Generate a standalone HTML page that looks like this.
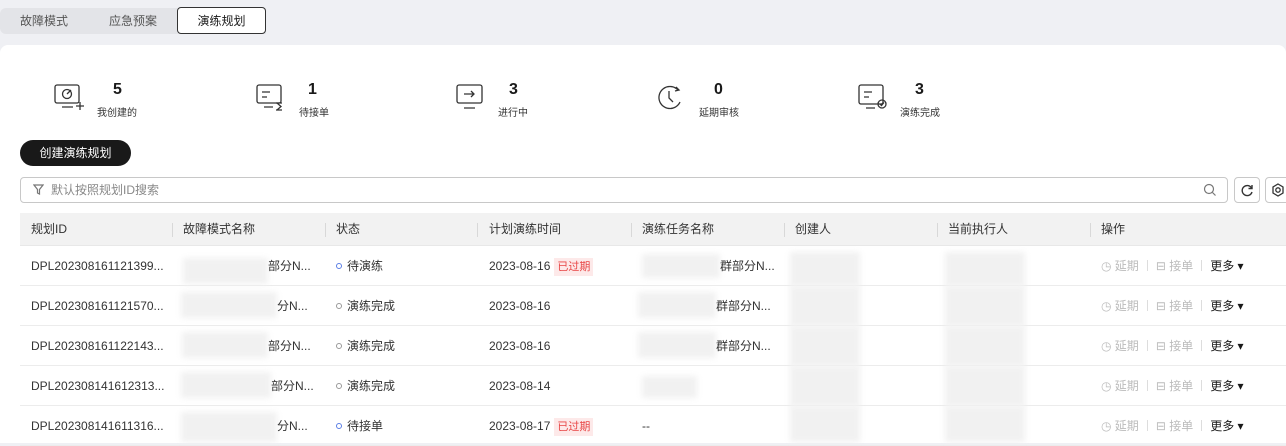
<!DOCTYPE html>
<html><head><meta charset="utf-8"><style>
*{box-sizing:border-box;margin:0;padding:0}
body{width:1286px;height:443px;overflow:hidden;background:#eff0f4;font-family:"Liberation Sans","Noto Sans CJK SC",sans-serif;font-size:12px;color:#191919;position:relative}
.abs{position:absolute}
.tabs{left:0;top:8px;width:266px;height:26px;background:#e3e4e8;border-radius:6px 0 0 6px}
.tab{position:absolute;top:0;height:26px;line-height:26px;font-size:12px;color:#555}
.tab.on{left:177px;top:-1px;width:89px;height:27px;background:#fff;border:1px solid #333;border-radius:4px;text-align:center;color:#191919}
.card{left:0;top:45px;width:1286px;height:398px;background:#fff;border-radius:8px 8px 0 0}
.stat .n{position:absolute;font-size:16px;font-weight:bold;top:81px}
.stat .l{position:absolute;font-size:10px;top:104px;color:#333}
.btn{left:20px;top:140px;width:111px;height:26px;background:#191919;color:#fff;border-radius:13px;text-align:center;line-height:26px;font-size:12px}
.search{left:20px;top:177px;width:1208px;height:26px;border:1px solid #c8c8c8;border-radius:4px;color:#888;line-height:24px;padding-left:30px}
.ib{top:177px;width:26px;height:26px;border:1px solid #c8c8c8;border-radius:4px}
.thead{left:20px;top:213px;width:1266px;height:33px;background:#f2f2f2;border-bottom:1px solid #e8e8e8}
.th{position:absolute;top:0;line-height:33px;color:#333}
.sep{position:absolute;top:10px;width:1px;height:14px;background:#d8d8d8}
.row{position:absolute;left:20px;width:1266px;height:40px;border-bottom:1px solid #ececec}
.c{position:absolute;top:0;line-height:40px;color:#333;white-space:nowrap}
.blur{position:absolute;background:#f1f1f1;filter:blur(3px)}
.tag{display:inline-block;background:#fde9e9;color:#e84545;font-size:11px;line-height:18px;padding:0 3px;margin-left:4px}
.dot{display:inline-block;width:6px;height:6px;border-radius:50%;border:1.5px solid #5b7ee5;margin-right:5px;vertical-align:1px}
.dot.g{border-color:#999}
.op{color:#bbb}
.op .s{display:inline-block;width:1px;height:11px;background:#ddd;margin:0 8px;vertical-align:-1px}
</style></head><body>
<div class="abs tabs">
<div class="tab" style="left:20px">故障模式</div>
<div class="tab" style="left:109px">应急预案</div>
<div class="tab on">演练规划</div>
</div>
<div class="abs card"></div>

<svg class="abs" style="left:54px;top:84px" width="32" height="28" viewBox="0 0 32 28" fill="none" stroke="#333" stroke-width="1.3"><rect x="1" y="1" width="24" height="18" rx="2"/><circle cx="13" cy="10" r="4.5"/><path d="M13 10l4-4M8 23h11M22 22h8M26 18v8"/></svg>
<div class="stat"><div class="n" style="left:113px">5</div><div class="l" style="left:97px">我创建的</div></div>
<svg class="abs" style="left:256px;top:84px" width="32" height="28" viewBox="0 0 32 28" fill="none" stroke="#333" stroke-width="1.3"><rect x="1" y="1" width="24" height="18" rx="2"/><path d="M6 8h8M6 13h5M8 23h9M20 19h6M20 26h6M21 19l4 3.5-4 3.5M25 19"/></svg>
<div class="stat"><div class="n" style="left:308px">1</div><div class="l" style="left:299px">待接单</div></div>
<svg class="abs" style="left:456px;top:84px" width="30" height="28" viewBox="0 0 30 28" fill="none" stroke="#333" stroke-width="1.3"><rect x="1" y="1" width="25" height="18" rx="2"/><path d="M8 10h10M15 7l3 3-3 3M8 24h11"/></svg>
<div class="stat"><div class="n" style="left:509px">3</div><div class="l" style="left:498px">进行中</div></div>
<svg class="abs" style="left:656px;top:84px" width="30" height="28" viewBox="0 0 30 28" fill="none" stroke="#333" stroke-width="1.3"><path d="M22 6A11 11 0 1 0 24 18" stroke-dasharray="2 0"/><path d="M20 3l3 3-4 1M13 7v7l4 4"/></svg>
<div class="stat"><div class="n" style="left:714px">0</div><div class="l" style="left:699px">延期审核</div></div>
<svg class="abs" style="left:858px;top:84px" width="32" height="28" viewBox="0 0 32 28" fill="none" stroke="#333" stroke-width="1.3"><rect x="1" y="1" width="24" height="19" rx="2"/><path d="M6 8h8M6 13h5M8 24h9"/><circle cx="24" cy="20" r="4"/><path d="M22 20l1.5 1.5 2.5-3"/></svg>
<div class="stat"><div class="n" style="left:915px">3</div><div class="l" style="left:900px">演练完成</div></div>

<div class="abs btn">创建演练规划</div>
<div class="abs search">默认按照规划ID搜索
<svg style="position:absolute;left:12px;top:6px" width="11" height="11" viewBox="0 0 11 11" fill="none" stroke="#777" stroke-width="1.2"><path d="M1 1h9L6.5 5.5V10L4.5 9V5.5z"/></svg>
<svg style="position:absolute;right:10px;top:5px" width="14" height="14" viewBox="0 0 14 14" fill="none" stroke="#777" stroke-width="1.2"><circle cx="6" cy="6" r="4.5"/><path d="M9.5 9.5l3 3"/></svg>
</div>
<div class="abs ib" style="left:1234px"><svg style="margin:6px" width="13" height="13" viewBox="0 0 13 13" fill="none" stroke="#333" stroke-width="1.4"><path d="M10.5 4A5 5 0 1 0 11 8"/><path d="M11 1v3.5H7.5"/></svg></div>
<div class="abs ib" style="left:1265px;width:30px"><svg style="margin:5px" width="14" height="14" viewBox="0 0 14 14" fill="none" stroke="#333" stroke-width="1.3"><path d="M7 1l5 3v6l-5 3-5-3V4z"/><circle cx="7" cy="7" r="2.2"/></svg></div>

<div class="abs thead">
<div class="th" style="left:11px">规划ID</div>
<div class="sep" style="left:152px"></div><div class="th" style="left:163px">故障模式名称</div>
<div class="sep" style="left:305px"></div><div class="th" style="left:316px">状态</div>
<div class="sep" style="left:457px"></div><div class="th" style="left:469px">计划演练时间</div>
<div class="sep" style="left:611px"></div><div class="th" style="left:622px">演练任务名称</div>
<div class="sep" style="left:764px"></div><div class="th" style="left:775px">创建人</div>
<div class="sep" style="left:917px"></div><div class="th" style="left:928px">当前执行人</div>
<div class="sep" style="left:1070px"></div><div class="th" style="left:1081px">操作</div>
</div>

<div class="row" style="top:246px">
<div class="c" style="left:11px">DPL202308161121399...</div>
<div class="blur" style="left:163px;top:12px;width:85px;height:26px"></div><div class="c" style="left:248px">部分N...</div>
<div class="c" style="left:316px"><span class="dot"></span>待演练</div>
<div class="c" style="left:469px">2023-08-16<span class="tag">已过期</span></div>
<div class="blur" style="left:622px;top:8px;width:78px;height:24px"></div><div class="c" style="left:700px">群部分N...</div>
<div class="blur" style="left:770px;top:6px;width:70px;height:34px"></div>
<div class="blur" style="left:925px;top:6px;width:80px;height:34px"></div>
<div class="c op" style="left:1081px">◷ 延期<span class="s"></span>⊟ 接单<span class="s"></span><span style="color:#191919">更多 ▾</span></div>
</div>
<div class="row" style="top:286px">
<div class="c" style="left:11px">DPL202308161121570...</div>
<div class="blur" style="left:161px;top:6px;width:96px;height:26px"></div><div class="c" style="left:257px">分N...</div>
<div class="c" style="left:316px"><span class="dot g"></span>演练完成</div>
<div class="c" style="left:469px">2023-08-16</div>
<div class="blur" style="left:618px;top:6px;width:78px;height:26px"></div><div class="c" style="left:696px">群部分N...</div>
<div class="blur" style="left:770px;top:0px;width:70px;height:40px"></div>
<div class="blur" style="left:925px;top:0px;width:80px;height:40px"></div>
<div class="c op" style="left:1081px">◷ 延期<span class="s"></span>⊟ 接单<span class="s"></span><span style="color:#191919">更多 ▾</span></div>
</div>
<div class="row" style="top:326px">
<div class="c" style="left:11px">DPL202308161122143...</div>
<div class="blur" style="left:162px;top:6px;width:86px;height:26px"></div><div class="c" style="left:248px">部分N...</div>
<div class="c" style="left:316px"><span class="dot g"></span>演练完成</div>
<div class="c" style="left:469px">2023-08-16</div>
<div class="blur" style="left:618px;top:6px;width:78px;height:26px"></div><div class="c" style="left:696px">群部分N...</div>
<div class="blur" style="left:770px;top:0px;width:70px;height:40px"></div>
<div class="blur" style="left:925px;top:0px;width:80px;height:40px"></div>
<div class="c op" style="left:1081px">◷ 延期<span class="s"></span>⊟ 接单<span class="s"></span><span style="color:#191919">更多 ▾</span></div>
</div>
<div class="row" style="top:366px">
<div class="c" style="left:11px">DPL202308141612313...</div>
<div class="blur" style="left:161px;top:6px;width:90px;height:26px"></div><div class="c" style="left:251px">部分N...</div>
<div class="c" style="left:316px"><span class="dot g"></span>演练完成</div>
<div class="c" style="left:469px">2023-08-14</div>
<div class="blur" style="left:622px;top:10px;width:55px;height:22px"></div>
<div class="blur" style="left:770px;top:0px;width:70px;height:40px"></div>
<div class="blur" style="left:925px;top:0px;width:80px;height:40px"></div>
<div class="c op" style="left:1081px">◷ 延期<span class="s"></span>⊟ 接单<span class="s"></span><span style="color:#191919">更多 ▾</span></div>
</div>
<div class="row" style="top:406px">
<div class="c" style="left:11px">DPL202308141611316...</div>
<div class="blur" style="left:161px;top:6px;width:96px;height:30px"></div><div class="c" style="left:257px">分N...</div>
<div class="c" style="left:316px"><span class="dot"></span>待接单</div>
<div class="c" style="left:469px">2023-08-17<span class="tag">已过期</span></div>
<div class="c" style="left:622px">--</div>
<div class="blur" style="left:770px;top:0px;width:70px;height:36px"></div>
<div class="blur" style="left:925px;top:0px;width:80px;height:36px"></div>
<div class="c op" style="left:1081px">◷ 延期<span class="s"></span>⊟ 接单<span class="s"></span><span style="color:#191919">更多 ▾</span></div>
</div>
</body></html>
